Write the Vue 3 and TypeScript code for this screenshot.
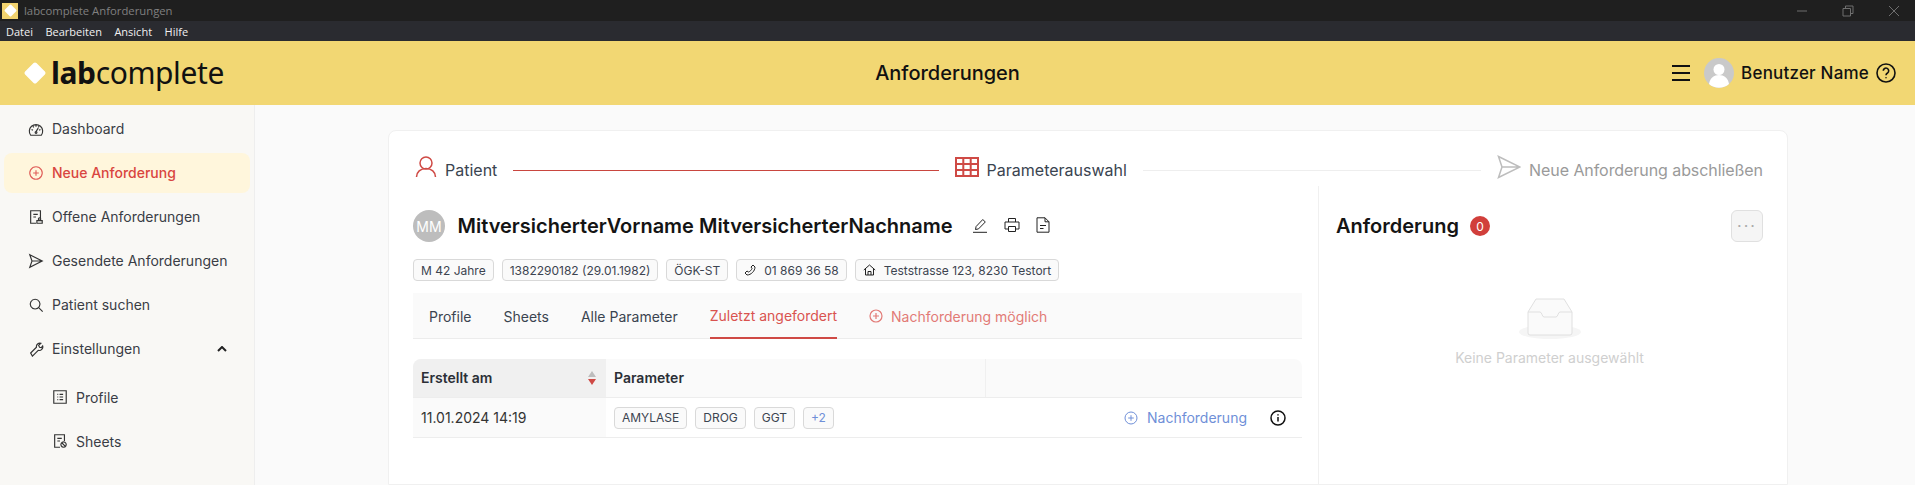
<script setup lang="ts">
interface NavItem { label: string; icon: string; active?: boolean; sub?: boolean; chevron?: boolean }

const icons: Record<string, string> = {
  gauge: 'M3 16a7.5 7.5 0 1 1 12 0zM4 9.5l1.5 1M14 9.5l-1.5 1M9 4.5v2M9 12l2.5-4M9 12a1 1 0 1 0 .1 0M5.6 6l1 1.2M12.4 6l-1 1.2',
  plus: 'M9 2a7 7 0 1 0 .01 0zM9 5.8v6.4M5.8 9h6.4',
  doc: 'M9 16H3V2h11v8M6 6h5M6 9h3M10 16v-3h6v3zM13 10a1.3 1.3 0 1 0 .01 0',
  send: 'M2 2l14 7-14 7 2.5-7zM4.5 9H16',
  search: 'M8 2.5a5.5 5.5 0 1 0 .01 0zM12 12l4.5 4.5',
  wrench: 'M3 13.5L9.5 7a4 4 0 0 1 5-4.5L12 5l1 2 2 .5 1.5-2a4 4 0 0 1-5 5L5 17zM3 13.5L5 17',
  list: 'M2 2h14v14H2zM6 6h1M8.5 6h4M6 9h1M8.5 9h4M6 12h1M8.5 12h4',
  sheet: 'M9 16H3V2h11v7M6 6h5M6 9h3M13 10a3 3 0 1 0 .01 0M11 11l4 4',
}

const nav: NavItem[] = [
  { label: 'Dashboard', icon: 'gauge' },
  { label: 'Neue Anforderung', icon: 'plus', active: true },
  { label: 'Offene Anforderungen', icon: 'doc' },
  { label: 'Gesendete Anforderungen', icon: 'send' },
  { label: 'Patient suchen', icon: 'search' },
  { label: 'Einstellungen', icon: 'wrench', chevron: true },
  { label: 'Profile', icon: 'list', sub: true },
  { label: 'Sheets', icon: 'sheet', sub: true },
]
const menu = ['Datei', 'Bearbeiten', 'Ansicht', 'Hilfe']
const tabs = ['Profile', 'Sheets', 'Alle Parameter']
const params = ['AMYLASE', 'DROG', 'GGT']
</script>

<template>
  <div class="app">
    <div class="titlebar">
      <span class="appicon"><i></i></span>
      <span class="apptitle">labcomplete Anforderungen</span>
      <div class="winctl">
        <svg width="12" height="12" viewBox="0 0 12 12"><path d="M1 6h10" /></svg>
        <svg width="12" height="12" viewBox="0 0 12 12"><path d="M1 3.5h7.5v7.5H1zM3.5 3.5V1H11v7.5H8.5" /></svg>
        <svg width="12" height="12" viewBox="0 0 12 12"><path d="M1 1l10 10M11 1L1 11" /></svg>
      </div>
    </div>
    <div class="menubar"><span v-for="m in menu" :key="m">{{ m }}</span></div>
    <header class="topbar">
      <div class="logo"><i class="diamond"></i><span class="logotext"><b>lab</b>complete</span></div>
      <div class="pagetitle">Anforderungen</div>
      <div class="user">
        <svg class="burger" width="18" height="16" viewBox="0 0 18 16"><path d="M0 1h18M0 8h18M0 15h18" /></svg>
        <svg class="avatar" width="30" height="30" viewBox="0 0 30 30">
          <circle cx="15" cy="15" r="15" fill="#c9c9c9" />
          <circle cx="15" cy="11.5" r="5.5" fill="#fff" />
          <path d="M5 26c1-6 5-9 10-9s9 3 10 9a15 15 0 0 1-20 0z" fill="#fff" />
        </svg>
        <span class="username">Benutzer Name</span>
        <svg class="help" width="20" height="20" viewBox="0 0 20 20">
          <circle cx="10" cy="10" r="9" />
          <path d="M7.3 7.8a2.7 2.7 0 1 1 4.2 2.2c-1 .6-1.5 1.1-1.5 2.2" />
          <path d="M10 14.3v1" />
        </svg>
      </div>
    </header>
    <div class="shell">
      <aside class="sidebar">
        <div
          v-for="item in nav"
          :key="item.label"
          class="navitem"
          :class="{ active: item.active, sub: item.sub }"
        >
          <svg class="navicon" width="16" height="16" viewBox="0 0 18 18"><path :d="icons[item.icon]" /></svg>
          <span class="navlabel">{{ item.label }}</span>
          <svg v-if="item.chevron" class="chev" width="10" height="6" viewBox="0 0 10 6"><path d="M1 5l4-4 4 4" /></svg>
        </div>
      </aside>
      <main class="main">
        <section class="card">
          <div class="steps">
            <div class="step done">
              <svg width="22" height="24" viewBox="0 0 22 24"><circle cx="11" cy="8" r="6" /><path d="M1.5 22c0-5 4-8.500 9.500-8.500s9.500 3.500 9.500 8.500" /></svg>
              <span>Patient</span>
            </div>
            <div class="line red"></div>
            <div class="step done">
              <svg class="grid" width="24" height="20" viewBox="0 0 24 20"><path d="M1 1h22v18H1zM1 7h22M1 13h22M8.300 1v18M15.700 1v18" /></svg>
              <span>Parameterauswahl</span>
            </div>
            <div class="line grey"></div>
            <div class="step off">
              <svg width="24" height="24" viewBox="0 0 24 24"><path d="M1.500 1.500L23 12 1.500 22.500 5 12zM5 12h18" /></svg>
              <span>Neue Anforderung abschließen</span>
            </div>
          </div>
          <div class="cols">
            <div class="left">
              <div class="patient">
                <span class="initials">MM</span>
                <h1>MitversicherterVorname MitversicherterNachname</h1>
                <div class="acts">
                  <svg width="16" height="16" viewBox="0 0 16 16"><path d="M1 15.300h14M3.500 12.500l.6-3L10.800 2.500l2.500 2.500-6.800 6.900z" /></svg>
                  <svg width="16" height="16" viewBox="0 0 16 16"><path d="M4.500 5V1.500h7V5M4.500 12H1V5h14v7h-3.500M4.500 9.500h7v5h-7z" /></svg>
                  <svg width="14" height="16" viewBox="0 0 14 16"><path d="M1 .8h8l4 4v10.400H1zM9 .8v4h4M4 8.500h6M4 11.500h3.500" /></svg>
                </div>
              </div>
              <div class="tags">
                <span class="tag">M 42 Jahre</span>
                <span class="tag">1382290182 (29.01.1982)</span>
                <span class="tag">ÖGK-ST</span>
                <span class="tag">
                  <svg width="12" height="12" viewBox="0 0 12 12"><path d="M9 1l2 2c0 4-4 8-8 8L1 9l2-2 1.500 1C6 7.500 7.500 6 8 4.500L7 3z" /></svg>
                  01 869 36 58
                </span>
                <span class="tag">
                  <svg width="13" height="12" viewBox="0 0 13 12"><path d="M.8 6L6.500 1l5.700 5M2.500 5v6h8V5M5 11V7.500h3V11" /></svg>
                  Teststrasse 123, 8230 Testort
                </span>
              </div>
              <nav class="tabs">
                <span v-for="t in tabs" :key="t" class="tab">{{ t }}</span>
                <span class="tab current">Zuletzt angefordert</span>
                <span class="tab soft">
                  <svg width="14" height="14" viewBox="0 0 14 14"><circle cx="7" cy="7" r="6" /><path d="M7 4v6M4 7h6" /></svg>
                  Nachforderung möglich
                </span>
              </nav>
              <div class="table">
                <div class="thead">
                  <div class="c1 sorted">
                    <span class="headlabel">Erstellt am</span>
                    <span class="sort"><i class="up"></i><i class="down"></i></span>
                  </div>
                  <div class="c2"><span class="headlabel">Parameter</span></div>
                  <div class="c3"></div>
                </div>
                <div class="trow">
                  <div class="c1 shade">11.01.2024 14:19</div>
                  <div class="c2 ptags">
                    <span v-for="p in params" :key="p" class="tag">{{ p }}</span>
                    <span class="tag more">+2</span>
                  </div>
                  <div class="c3 rowact">
                    <span class="link">
                      <svg width="14" height="14" viewBox="0 0 14 14"><circle cx="7" cy="7" r="6" /><path d="M7 4.200v5.600M4.200 7h5.600" /></svg>
                      Nachforderung
                    </span>
                    <svg class="info" width="16" height="16" viewBox="0 0 16 16"><circle cx="8" cy="8" r="7" /><path d="M8 7v4.500M8 4.200v1.300" /></svg>
                  </div>
                </div>
              </div>
            </div>
            <div class="right">
              <div class="righthead">
                <h2>Anforderung</h2>
                <span class="badge">0</span>
                <span class="morebtn">···</span>
              </div>
              <div class="empty">
                <svg width="64" height="41" viewBox="0 0 64 41">
                  <ellipse cx="32" cy="34" rx="31" ry="7" fill="#f5f5f5" />
                  <path d="M10 14L18 1h28l8 13v21a2 2 0 0 1-2 2H12a2 2 0 0 1-2-2z" fill="#fafafa" stroke="#e0e0e0" />
                  <path d="M10 14h12c2 0 2 5 4 5h12c2 0 2-5 4-5h12" fill="none" stroke="#e0e0e0" />
                </svg>
                <p>Keine Parameter ausgewählt</p>
              </div>
            </div>
          </div>
        </section>
      </main>
    </div>
  </div>
</template>

<style>
html, body { margin: 0; overflow: hidden; }
</style>

<style scoped>
.app { height: 485px; display: flex; flex-direction: column; overflow: hidden; font-family: Inter, sans-serif; font-size: 14px; color: #333; }
svg { fill: none; stroke: currentColor; flex: none; }
i { display: block; }

.titlebar { height: 21px; flex: none; background: #1f1f1f; display: flex; align-items: center; color: #808080; font: 11.300px "Open Sans", sans-serif; }
.appicon { width: 16px; height: 16px; margin-left: 2px; background: #f2d36f; display: flex; align-items: center; justify-content: center; }
.appicon i { width: 9px; height: 9px; background: #fff; transform: rotate(45deg); border-radius: 1px; }
.apptitle { margin-left: 6px; }
.winctl { margin-left: auto; display: flex; gap: 34px; padding-right: 15px; color: #6f6f6f; }

.menubar { height: 20px; flex: none; background: #2a2b30; color: #f0f0f0; display: flex; align-items: center; gap: 12.500px; padding-left: 6px; font: 11px "Open Sans", sans-serif; }

.topbar { height: 64px; flex: none; background: #f2d773; display: flex; align-items: center; position: relative; color: #111; }
.logo { display: flex; align-items: center; margin-left: 27px; gap: 7px; }
.diamond { width: 16px; height: 16px; background: #fff; transform: rotate(45deg); border-radius: 2px; }
.logotext { font: 400 30px/1 "Noto Sans", sans-serif; letter-spacing: -0.400px; margin-left: 1px; }
.logotext b { font-weight: 700; }
.pagetitle { flex: 1; text-align: center; font-size: 20px; font-weight: 500; margin-left: -1px; }
.user { display: flex; align-items: center; padding-right: 19px; }
.burger { margin-right: 14px; stroke-width: 2; }
.avatar { stroke: none; }
.username { margin: 0 7px; font-size: 17px; font-weight: 500; letter-spacing: 0.200px; white-space: nowrap; }
.help { stroke-width: 1.600; }

.shell { flex: 1; display: flex; min-height: 0; background: #fafafa; }
.sidebar { width: 255px; flex: none; box-sizing: border-box; border-right: 1px solid #eeeeee; background: #f9f8f5; padding: 4px 4px 0; display: flex; flex-direction: column; gap: 4px; }
.navitem { height: 40px; flex: none; display: flex; align-items: center; gap: 8px; padding-left: 24px; padding-right: 23px; border-radius: 8px; color: #3a3d45; }
.navlabel { white-space: nowrap; padding-bottom: 2px; }
.navitem.sub { padding-left: 48px; }
.navitem.sub .navlabel { padding-bottom: 0; }
.navitem.sub:nth-child(7) { margin-top: 4px; }
.navitem.active { background: #fff6dc; color: #d9453f; font-weight: 500; }
.navicon { stroke-width: 1.300; color: #333; }
.active .navicon { color: #e0605b; }
.chev { margin-left: auto; stroke-width: 2; color: #222; }

.main { flex: 1; padding: 25px 127px 0 133px; min-width: 0; }
.card { background: #fff; border: 1px solid #f0f0f0; border-radius: 8px 8px 0 0; height: 100%; box-sizing: border-box; padding: 0 24px; }

.steps { display: flex; align-items: center; height: 32px; padding-top: 23px; gap: 16px; padding-left: 2px; }
.step { display: flex; align-items: center; gap: 8px; font-size: 16px; color: #3a4450; }
.step svg { stroke-width: 1.500; margin-top: -6px; }
.step svg.grid { stroke-width: 2; }
.step.done svg { color: #cf4a45; }
.step.off { color: #9a9a9a; letter-spacing: -0.070px; }
.step.off svg { color: #bdbdbd; margin-top: -6px; }
.line { height: 1px; }
.line.red { flex: 425 1 0; background: #c9463f; }
.line.grey { flex: 338 1 0; background: #eeeeee; }

.cols { display: flex; }
.left { width: 889px; flex: none; padding-top: 24px; }
.right { flex: 1; margin-left: 16px; border-left: 1px solid #f0f0f0; padding: 24px 0 0 17px; height: 300px; }

.patient { height: 32px; display: flex; align-items: center; }
.initials { width: 32px; height: 32px; border-radius: 50%; background: #bdbdbd; color: #fff; display: flex; align-items: center; justify-content: center; font-size: 14px; flex: none; }
h1 { margin: 0 0 0 12.500px; font-size: 20px; font-weight: 600; color: #141414; white-space: nowrap; }
.acts { display: flex; gap: 16px; margin-left: 19px; color: #222; margin-top: -2px; }

.tags { display: flex; gap: 8px; margin-top: 17px; }
.tag { height: 22px; box-sizing: border-box; border: 1px solid #d9d9d9; border-radius: 4px; background: #fafafa; font-size: 12px; display: inline-flex; align-items: center; gap: 8px; padding: 0 7px; color: #3c4450; white-space: nowrap; }
.tag svg { color: #222; }

.tabs { margin-top: 12px; height: 46px; box-sizing: border-box; background: #fafafa; border-bottom: 1px solid #ececec; display: flex; padding-left: 16px; gap: 32px; }
.tab { height: 46px; box-sizing: border-box; display: flex; align-items: center; gap: 8px; color: #3a4450; }
.tab.current { color: #d9534f; border-bottom: 2px solid #cf4a45; }
.tab.soft { color: #e27a76; }
.tab.soft svg { stroke-width: 1.200; }

.table { margin-top: 20px; }
.thead, .trow { display: flex; box-sizing: border-box; }
.thead { height: 39px; background: #fafafa; border-radius: 8px 8px 0 0; border-bottom: 1px solid #ededed; font-weight: 600; color: #2b2f36; overflow: hidden; }
.headlabel { padding-bottom: 2px; }
.trow { height: 40px; border-bottom: 1px solid #ededed; }
.c1 { width: 193px; flex: none; box-sizing: border-box; padding: 0 8px; display: flex; align-items: center; }
.c2 { width: 380px; flex: none; box-sizing: border-box; padding: 0 8px; display: flex; align-items: center; }
.c3 { flex: 1; display: flex; align-items: center; }
.thead .c2 { border-right: 1px solid #f0f0f0; }
.sorted { background: #f0f0f0; justify-content: space-between; padding-right: 10px; }
.shade { background: #fafafa; }
.sort { display: flex; flex-direction: column; gap: 2px; }
.sort i { width: 0; height: 0; border-left: 4.500px solid transparent; border-right: 4.500px solid transparent; }
.sort .up { border-bottom: 6px solid #bdbdbd; }
.sort .down { border-top: 6px solid #cf4a45; }
.ptags { gap: 8px; }
.more { color: #6f8fd8; }
.rowact { justify-content: flex-end; padding-right: 16px; }
.link { display: flex; align-items: center; gap: 9px; color: #6f8fd8; margin-right: 23px; }
.info { stroke-width: 1.500; color: #111; }

.righthead { height: 32px; display: flex; align-items: center; }
h2 { margin: 0; font-size: 20px; font-weight: 600; color: #141414; }
.badge { width: 20px; height: 20px; border-radius: 50%; background: #d13f3b; color: #fff; font-size: 12px; display: flex; align-items: center; justify-content: center; margin-left: 11px; }
.morebtn { margin-left: auto; width: 32px; height: 32px; box-sizing: border-box; border: 1px solid #e0e0e0; border-radius: 6px; background: #f5f5f5; color: #aaa; display: flex; align-items: center; justify-content: center; letter-spacing: 2px; font-size: 16px; }

.empty { margin-top: 56px; display: flex; flex-direction: column; align-items: center; }
.empty svg { stroke: none; }
.empty p { margin: 10px 0 0; color: #cfcfcf; font-size: 14px; }
</style>
